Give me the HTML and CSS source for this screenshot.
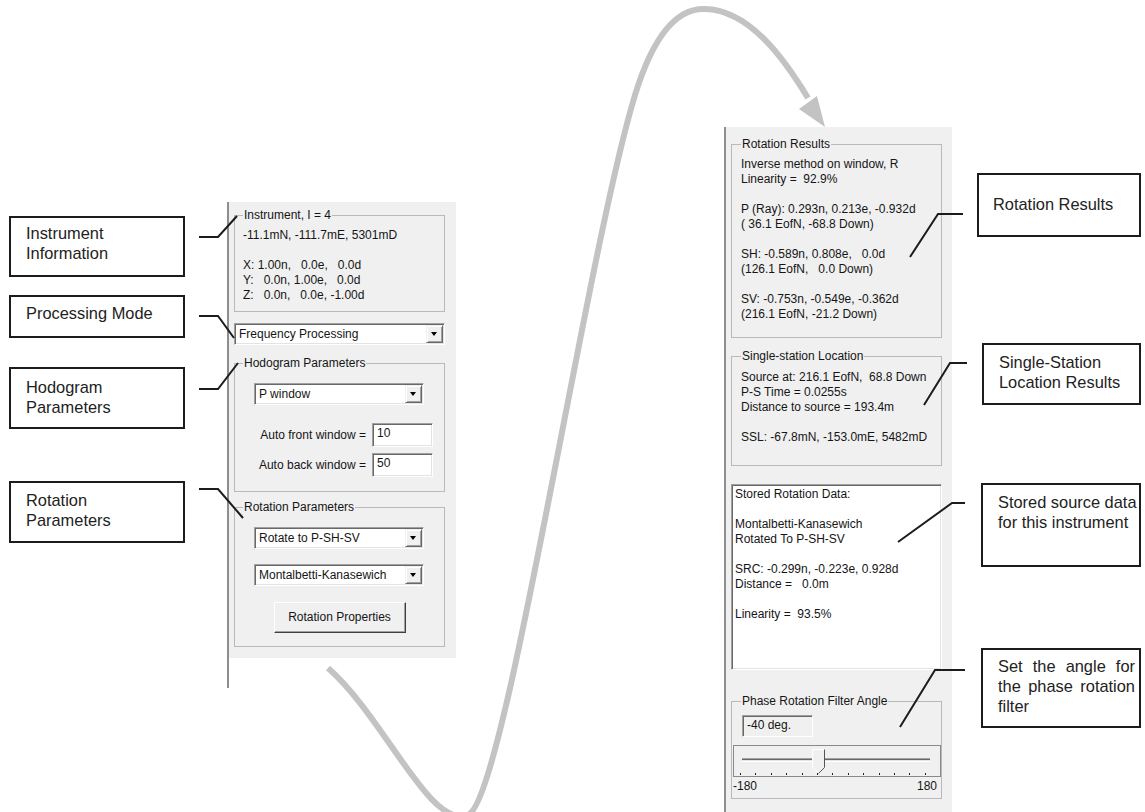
FILE: index.html
```html
<!DOCTYPE html>
<html lang="en">
<head>
    <meta charset="UTF-8">
    <title>Hodogram and Rotation Panels</title>
    <link rel="stylesheet" href="styles.css">
</head>
<body>
<div class="canvas">
    <!-- callouts, left side -->
    <div class="callout c-instrument">Instrument<br>Information</div>
    <div class="callout c-mode">Processing Mode</div>
    <div class="callout c-hodogram">Hodogram<br>Parameters</div>
    <div class="callout c-rotation">Rotation<br>Parameters</div>

    <!-- callouts, right side -->
    <div class="callout c-results">Rotation Results</div>
    <div class="callout c-station">Single-Station<br>Location Results</div>
    <div class="callout c-stored">Stored source data<br>for this instrument</div>
    <div class="callout c-angle">Set the angle for the phase rotation filter</div>

    <!-- left dialog panel -->
    <div class="panel panel-left">
        <div class="panel-body">
            <fieldset class="group">
                <legend>Instrument, I = 4</legend>
                <div class="lines g-instrument">-11.1mN, -111.7mE, 5301mD

X: 1.00n,   0.0e,   0.0d
Y:   0.0n, 1.00e,   0.0d
Z:   0.0n,   0.0e, -1.00d</div>
            </fieldset>

            <div class="combo combo-wide">
                <span class="combo-text">Frequency Processing</span>
                <span class="combo-btn"></span>
            </div>

            <fieldset class="group g-hodogram">
                <legend>Hodogram Parameters</legend>
                <div class="combo combo-inner">
                    <span class="combo-text">P window</span>
                    <span class="combo-btn"></span>
                </div>
                <div class="field-row row-front">
                    <span>Auto front window =</span>
                    <span class="field">10</span>
                </div>
                <div class="field-row row-back">
                    <span>Auto back window =</span>
                    <span class="field">50</span>
                </div>
            </fieldset>

            <fieldset class="group g-rotation">
                <legend>Rotation Parameters</legend>
                <div class="combo combo-inner">
                    <span class="combo-text">Rotate to P-SH-SV</span>
                    <span class="combo-btn"></span>
                </div>
                <div class="combo combo-inner combo-method">
                    <span class="combo-text">Montalbetti-Kanasewich</span>
                    <span class="combo-btn"></span>
                </div>
                <button class="btn" type="button">Rotation Properties</button>
            </fieldset>
        </div>
    </div>

    <!-- right dialog panel -->
    <div class="panel panel-right">
        <fieldset class="group group-r g-results">
            <legend>Rotation Results</legend>
            <div class="lines">Inverse method on window, R
Linearity =  92.9%

P (Ray): 0.293n, 0.213e, -0.932d
( 36.1 EofN, -68.8 Down)

SH: -0.589n, 0.808e,   0.0d
(126.1 EofN,   0.0 Down)

SV: -0.753n, -0.549e, -0.362d
(216.1 EofN, -21.2 Down)</div>
        </fieldset>

        <fieldset class="group group-r g-station">
            <legend>Single-station Location</legend>
            <div class="lines">Source at: 216.1 EofN,  68.8 Down
P-S Time = 0.0255s
Distance to source = 193.4m

SSL: -67.8mN, -153.0mE, 5482mD</div>
        </fieldset>

        <div class="memo lines">Stored Rotation Data:

Montalbetti-Kanasewich
Rotated To P-SH-SV

SRC: -0.299n, -0.223e, 0.928d
Distance =   0.0m

Linearity =  93.5%</div>

        <fieldset class="group g-phase">
            <legend>Phase Rotation Filter Angle</legend>
            <div class="angle-field">-40 deg.</div>
            <svg class="slider" width="208" height="32" viewBox="0 0 208 32">
                <rect x="0.5" y="0.5" width="207" height="31" fill="none" stroke="#222" stroke-dasharray="1 1"/>
                <line x1="9" y1="13.5" x2="197" y2="13.5" stroke="#a0a0a0"/>
                <line x1="9" y1="14.5" x2="197" y2="14.5" stroke="#696969"/>
                <line x1="9" y1="15.5" x2="197" y2="15.5" stroke="#e3e3e3"/>
                <line x1="9" y1="16.5" x2="197" y2="16.5" stroke="#fff"/>
                <polygon points="79.5,4.5 91.5,4.5 91.5,22.5 85.5,28 79.5,22.5" fill="#f0f0f0" stroke="#fff"/>
                <polyline points="91.5,4.5 91.5,22.5 85.5,28.5" fill="none" stroke="#555"/>
                <g fill="#222">
                    <rect x="7" y="28" width="1" height="2"/>
                    <rect x="22" y="28" width="1" height="2"/>
                    <rect x="38" y="28" width="1" height="2"/>
                    <rect x="53" y="28" width="1" height="2"/>
                    <rect x="69" y="28" width="1" height="2"/>
                    <rect x="84" y="28" width="1" height="2"/>
                    <rect x="99" y="28" width="1" height="2"/>
                    <rect x="115" y="28" width="1" height="2"/>
                    <rect x="130" y="28" width="1" height="2"/>
                    <rect x="146" y="28" width="1" height="2"/>
                    <rect x="161" y="28" width="1" height="2"/>
                    <rect x="176" y="28" width="1" height="2"/>
                    <rect x="192" y="28" width="1" height="2"/>
                </g>
            </svg>
            <div class="slider-labels"><span>-180</span><span>180</span></div>
        </fieldset>
    </div>

    <!-- connector lines and the big curved arrow -->
    <svg class="overlay" width="1145" height="812" viewBox="0 0 1145 812">
        <path d="M328 668 C385 718, 430 830, 468 815 C505 800, 585 260, 635 95 C655 30, 680 8, 705 9 C750 10, 785 60, 808 98"
              fill="none" stroke="#c3c3c3" stroke-width="6"/>
        <polygon points="825,127 799,109 817,96" fill="#c3c3c3"/>
        <g fill="none" stroke="#1c1c1c" stroke-width="2">
            <path d="M199 237 H218 L237 216"/>
            <path d="M199 316 H218 L234 338"/>
            <path d="M199 389 H218 L238 363"/>
            <path d="M199 489 H218 L243 518"/>
            <path d="M910 257 L938 214 H963"/>
            <path d="M924 405 L950 363 H967"/>
            <path d="M898 542 L952 503 H965"/>
            <path d="M900 727 L935 670 H965"/>
        </g>
    </svg>
</div>
</body>
</html>
```

FILE: styles.css
```css
* {
    box-sizing: border-box;
}
body {
    margin: 0;
    background: #fff;
    font-family: "Liberation Sans", Arial, sans-serif;
}
.canvas {
    position: relative;
    width: 1145px;
    height: 812px;
    overflow: hidden;
}

/* callout boxes */
.callout {
    position: absolute;
    background: #fff;
    border: 2px solid #1c1c1c;
    color: #222;
    font-size: 16.4px;
    line-height: 20px;
    padding: 5px 10px 0 15px;
}
.c-instrument { left: 9px; top: 216px; width: 176px; height: 61px; }
.c-mode { left: 9px; top: 295px; width: 176px; height: 43px; padding-top: 6px; }
.c-hodogram { left: 9px; top: 367px; width: 176px; height: 62px; padding-top: 8px; }
.c-rotation { left: 9px; top: 481px; width: 176px; height: 62px; padding-top: 7px; }
.c-results { left: 977px; top: 173px; width: 164px; height: 64px; padding: 19px 8px 0 14px; }
.c-station { left: 982px; top: 343px; width: 159px; height: 62px; padding-top: 7px; }
.c-stored { left: 981px; top: 483px; width: 160px; height: 84px; padding-top: 7px; white-space: nowrap; }
.c-angle { left: 981px; top: 648px; width: 160px; height: 80px; padding: 6px 4px 0 15px; text-align: justify; }

/* dialog panels */
.panel {
    position: absolute;
    border-left: 2px solid #8e8e8e;
    font-size: 12px;
    line-height: 15px;
    color: #151515;
}
.panel-left {
    left: 227px;
    top: 202px;
    width: 229px;
    height: 486px;
}
.panel-body {
    background: #f0f0f0;
    padding: 6px 0 11px 5px;
}
.panel-right {
    left: 724px;
    top: 127px;
    width: 228px;
    height: 685px;
    background: #f0f0f0;
    padding: 10px 0 0 5px;
}

.group {
    width: 211px;
    min-width: 0;
    margin: 0;
    padding: 5px 8px 8px;
    border: 1px solid #b9b9b9;
}
.group legend {
    padding: 0 1px;
    line-height: 15px;
}
.group-r {
    padding-left: 9px;
    padding-right: 9px;
}
.lines {
    white-space: pre;
}

.g-hodogram {
    margin-top: 11px;
    padding-top: 12px;
    padding-bottom: 14px;
}
.g-rotation {
    margin-top: 8px;
    padding-top: 12px;
    padding-bottom: 13px;
}
.g-results {
    padding-bottom: 15px;
}
.g-station {
    margin-top: 11px;
    padding-top: 6px;
    padding-bottom: 20px;
}

/* combo boxes */
.combo {
    display: flex;
    align-items: center;
    height: 22px;
    background: #fff;
    border: 1px solid;
    border-color: #a0a0a0 #fff #fff #a0a0a0;
    box-shadow: inset 1px 1px 0 #696969, inset -1px -1px 0 #e3e3e3;
    padding: 0 1px 0 2px;
}
.combo-wide {
    width: 211px;
    margin-top: 11px;
}
.combo-inner {
    width: 170px;
    margin-left: 11px;
}
.combo-method {
    margin-top: 15px;
}
.combo-text {
    flex: 1;
    padding-left: 2px;
    line-height: 18px;
}
.combo-btn {
    position: relative;
    width: 17px;
    height: 18px;
    background: #f0f0f0;
    border: 1px solid;
    border-color: #f0f0f0 #696969 #696969 #f0f0f0;
    box-shadow: inset 1px 1px 0 #fff, inset -1px -1px 0 #a0a0a0;
}
.combo-btn::after {
    content: "";
    position: absolute;
    left: 4px;
    top: 6px;
    border-top: 4px solid #000;
    border-left: 3.5px solid transparent;
    border-right: 3.5px solid transparent;
}

/* edit fields */
.field-row {
    display: flex;
    justify-content: flex-end;
    align-items: center;
    gap: 6px;
    margin-right: 3px;
}
.row-front {
    margin-top: 18px;
}
.row-back {
    margin-top: 6px;
}
.field {
    width: 61px;
    height: 24px;
    background: #fff;
    border: 1px solid;
    border-color: #a0a0a0 #fff #fff #a0a0a0;
    box-shadow: inset 1px 1px 0 #696969, inset -1px -1px 0 #e3e3e3;
    padding: 2px 0 0 4px;
    line-height: 15px;
}

.btn {
    display: block;
    width: 132px;
    height: 31px;
    margin: 16px auto 0;
    background: #f0f0f0;
    border: 1px solid;
    border-color: #fff #404040 #404040 #fff;
    box-shadow: inset -1px -1px 0 #a0a0a0;
    font: inherit;
    color: inherit;
    padding: 0;
}

/* stored data box */
.memo {
    width: 211px;
    height: 186px;
    margin-top: 18px;
    background: #fff;
    border: 1px solid;
    border-color: #a0a0a0 #fff #fff #a0a0a0;
    box-shadow: inset 1px 1px 0 #696969, inset -1px -1px 0 #e3e3e3;
    padding: 2px 3px;
}

/* phase filter */
.g-phase {
    margin-top: 24px;
    padding: 0 1px 4px;
}
.g-phase legend {
    margin-left: 8px;
}
.angle-field {
    width: 71px;
    height: 22px;
    margin: 6px 0 0 9px;
    border: 1px solid;
    border-color: #a0a0a0 #fff #fff #a0a0a0;
    box-shadow: inset 1px 1px 0 #696969;
    padding: 2px 0 0 4px;
}
.slider {
    display: block;
    margin-top: 8px;
}
.slider-labels {
    display: flex;
    justify-content: space-between;
    margin-top: 2px;
    padding-right: 3px;
}

.overlay {
    position: absolute;
    left: 0;
    top: 0;
    pointer-events: none;
}
```
